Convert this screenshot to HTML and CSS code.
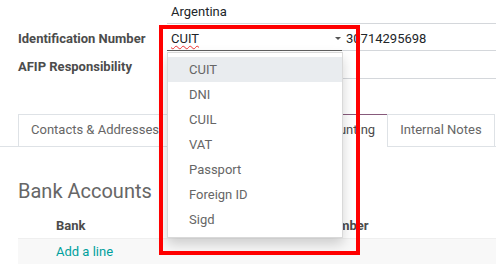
FILE: index.html
```html
<!DOCTYPE html>
<html lang="en">
<head>
    <meta charset="UTF-8" />
    <title>Partner</title>
    <link rel="stylesheet" href="styles.css">
</head>
<body>
    <div class="sheet">
        <div class="group">
            <div class="label"></div>
            <div class="field"><span class="input">Argentina</span></div>

            <div class="label">Identification Number</div>
            <div class="field split">
                <div class="select">
                    <span class="spell">CUIT</span><span class="caret"></span>
                    <ul class="menu">
                        <li class="hover">CUIT</li>
                        <li>DNI</li>
                        <li>CUIL</li>
                        <li>VAT</li>
                        <li>Passport</li>
                        <li>Foreign ID</li>
                        <li>Sigd</li>
                    </ul>
                </div>
                <div class="input num">30714295698</div>
            </div>

            <div class="label">AFIP Responsibility</div>
            <div class="field"></div>
        </div>

        <ul class="tabs">
            <li>Contacts &amp; Addresses</li>
            <li>Sales &amp; Purchase</li>
            <li class="active">Accounting</li>
            <li>Internal Notes</li>
        </ul>

        <h2 class="title">Bank Accounts</h2>
        <div class="list">
            <div class="row head">
                <div></div>
                <div>Bank</div>
                <div>Account Number</div>
            </div>
            <div class="row add">
                <div></div>
                <div class="link">Add a line</div>
                <div></div>
            </div>
        </div>
    </div>
    <!--标注框-->
    <div class="mark"></div>
</body>
</html>
```

FILE: styles.css
```css
*{
    margin:0;
    padding:0;
    box-sizing: border-box;
}
body{
    font-family: Roboto, "Liberation Sans", sans-serif;
    font-size: 13px;
    color: #4c4c4c;
    background: #fff;
    overflow: hidden;
}
ul{
    list-style: none;
}
.sheet{
    padding-left: 18px;
    width: 496px;
}
.group{
    display: grid;
    grid-template-columns: 149px 1fr;
    grid-template-rows: 24px 27px 28px;
}
.label{
    align-self: end;
    height: 24px;
    line-height: 23px;
    font-weight: bold;
    color: #4c4c4c;
}
.field{
    align-self: end;
    height: 24px;
    line-height: 23px;
    border-bottom: 1px solid #d4d7db;
    color: #212529;
    margin-right: -18px;
}
.field .input{
    padding-left: 4px;
}
.split{
    display: flex;
    border-bottom: none;
}
.select{
    position: relative;
    width: 175px;
    height: 24px;
    padding-left: 4px;
    border-bottom: 1px solid #5f5f5f;
}
.spell{
    text-decoration: underline wavy #e33;
    text-decoration-thickness: 1px;
    text-underline-offset: 2px;
}
.caret{
    position: absolute;
    right: 1px;
    top: 10px;
    border-top: 3px solid #555;
    border-left: 3px solid transparent;
    border-right: 3px solid transparent;
}
.num{
    flex: 1;
    height: 24px;
    padding-left: 4px;
    border-bottom: 1px solid #d4d7db;
}
.menu{
    position: absolute;
    left: 0;
    top: calc(100% + 2px);
    width: 176px;
    padding: 4px 0 5px;
    background: #fff;
    border: 1px solid rgba(0,0,0,.15);
    box-shadow: 0 6px 12px rgba(0,0,0,.175);
    z-index: 5;
}
.menu li{
    height: 25px;
    line-height: 25px;
    padding-left: 21px;
    color: #666;
}
.menu .hover{
    background: #e9ecef;
}
.tabs{
    display: flex;
    margin: 35px -18px 0;
    padding-left: 18px;
    border-bottom: 1px solid #dee2e6;
    height: 33px;
}
.tabs li{
    height: 33px;
    line-height: 30px;
    padding: 0 12px;
    border: 1px solid #dee2e6;
    color: #666;
    white-space: nowrap;
}
.tabs li + li{
    margin-left: -1px;
}
.tabs .active{
    border-top-color: #875a7b;
    border-bottom-color: #fff;
    color: #4c4c4c;
}
.title{
    margin-top: 32px;
    font-size: 20px;
    line-height: 25px;
    font-weight: normal;
    color: #666;
}
.list{
    margin-top: 9px;
    margin-right: -18px;
}
.row{
    display: grid;
    grid-template-columns: 38px 214px 1fr;
}
.head{
    height: 25px;
    line-height: 25px;
    font-weight: bold;
    color: #4c4c4c;
}
.add{
    height: 26px;
    line-height: 26px;
    background: #f8f8f8;
    border-top: 1px solid #efefef;
}
.link{
    color: #00a09d;
}
.mark{
    position: absolute;
    left: 159px;
    top: 25px;
    width: 201px;
    height: 230px;
    border: 4px solid #ff0000;
    z-index: 10;
}
```
